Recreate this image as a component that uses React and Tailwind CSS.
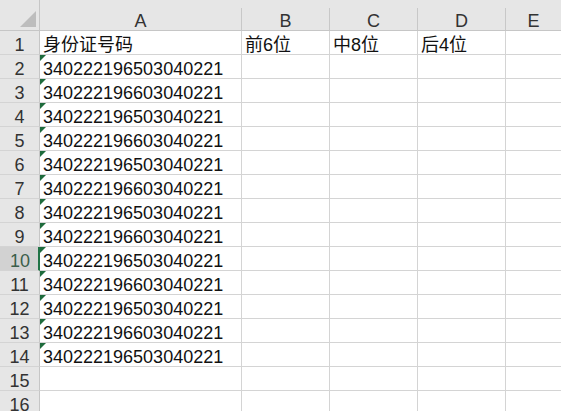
import React from "react";

const ids = [
  "340222196503040221",
  "340222196603040221",
  "340222196503040221",
  "340222196603040221",
  "340222196503040221",
  "340222196603040221",
  "340222196503040221",
  "340222196603040221",
  "340222196503040221",
  "340222196603040221",
  "340222196503040221",
  "340222196603040221",
  "340222196503040221",
];

const font = { fontFamily: '"Liberation Sans", "Noto Sans CJK SC", sans-serif' };

function ColHead({ label, last }) {
  return (
    <div className="h-[31px] bg-[#e6e6e6] border-b border-[#c6c6c6] flex flex-col">
      <div className="h-[8px]" />
      <div
        className={
          "flex-1 flex items-end justify-center leading-[18px] text-[18px] text-[#333] " +
          (last ? "" : "border-r border-[#c8c8c8]")
        }
      >
        {label}
      </div>
    </div>
  );
}

function RowHead({ n, active }) {
  return (
    <div
      className={
        "h-[24px] flex items-end justify-center leading-[18px] text-[18px] border-b border-[#d4d4d4] " +
        (active
          ? "bg-[#d2d2d2] text-[#3b5e4a] border-r-2 border-r-[#217346] pl-[2px]"
          : "bg-[#e6e6e6] text-[#333] border-r border-r-[#c6c6c6]")
      }
    >
      {n}
    </div>
  );
}

function Cell({ children, tri, last }) {
  return (
    <div
      className={
        "relative h-[24px] flex items-end pl-[3px] leading-[18px] text-[18px] text-[#111] whitespace-nowrap border-b border-[#d4d4d4] " +
        (last ? "" : "border-r")
      }
    >
      {tri && (
        <div className="absolute left-0 top-0 w-0 h-0 border-t-[6px] border-t-[#1e6b3c] border-r-[6px] border-r-transparent" />
      )}
      {children}
    </div>
  );
}

export default function App() {
  const rows = [];
  for (let r = 1; r <= 16; r++) {
    let a = "";
    let b = "";
    let c = "";
    let d = "";
    if (r === 1) {
      a = "身份证号码";
      b = "前6位";
      c = "中8位";
      d = "后4位";
    } else if (r <= 14) {
      a = ids[r - 2];
    }
    const tri = r >= 2 && r <= 14;
    rows.push(
      <React.Fragment key={r}>
        <RowHead n={r} active={r === 10} />
        <Cell tri={tri}>{a}</Cell>
        <Cell>{b}</Cell>
        <Cell>{c}</Cell>
        <Cell>{d}</Cell>
        <Cell last />
      </React.Fragment>
    );
  }
  return (
    <div
      className="w-[561px] h-[411px] overflow-hidden bg-white"
      style={font}
    >
      <div className="grid grid-cols-[40px_202px_88px_88px_88px_1fr]">
        <div className="h-[31px] bg-[#e6e6e6] border-b border-r border-[#c6c6c6] relative">
          <div className="absolute left-[20px] top-[11px] w-0 h-0 border-b-[16px] border-b-[#bdbdbd] border-l-[16px] border-l-transparent" />
        </div>
        <ColHead label="A" />
        <ColHead label="B" />
        <ColHead label="C" />
        <ColHead label="D" />
        <ColHead label="E" last />
        {rows}
      </div>
    </div>
  );
}
